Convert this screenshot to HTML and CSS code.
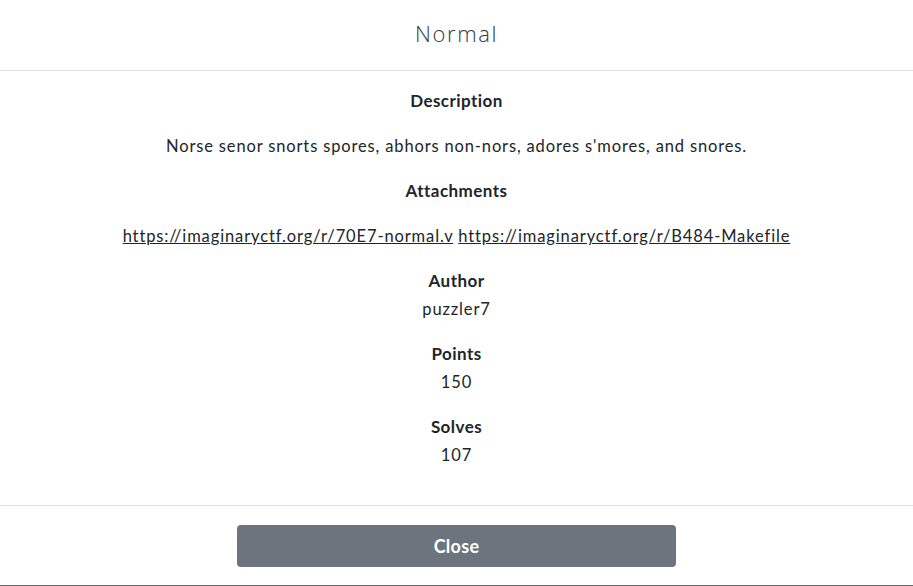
FILE: index.html
```html
<!DOCTYPE html>
<html lang="en">
<head>
<meta charset="utf-8">
<title>Normal</title>
<link rel="stylesheet" href="styles.css">
</head>
<body>
<div class="modal">
  <header class="modal-header">
    <h1 class="modal-title">Normal</h1>
  </header>
  <main class="modal-body">
    <h2 class="label">Description</h2>
    <p class="text gap">Norse senor snorts spores, abhors non-nors, adores s'mores, and snores.</p>
    <h2 class="label">Attachments</h2>
    <p class="text gap links"><a href="#">https://imaginaryctf.org/r/70E7-normal.v</a> <a href="#">https://imaginaryctf.org/r/B484-Makefile</a></p>
    <h2 class="label tight">Author</h2>
    <p class="text">puzzler7</p>
    <h2 class="label tight">Points</h2>
    <p class="text">150</p>
    <h2 class="label tight">Solves</h2>
    <p class="text">107</p>
  </main>
  <footer class="modal-footer">
    <button class="btn-close" type="button">Close</button>
  </footer>
</div>
</body>
</html>
```
FILE: styles.css
```css
html, body {
  margin: 0;
  padding: 0;
  background: #ffffff;
}
body {
  font-family: Lato, "Liberation Sans", sans-serif;
  color: #212529;
}
.modal {
  display: flex;
  flex-direction: column;
  height: 586px;
  box-sizing: border-box;
  border-bottom: 1px solid #666a6e;
}
.modal-header {
  height: 70px;
  border-bottom: 1px solid #dee2e6;
  display: flex;
  align-items: center;
  justify-content: center;
}
.modal-title {
  margin: 0;
  font-family: "Open Sans", sans-serif;
  font-weight: 300;
  font-size: 22px;
  letter-spacing: 1.6px;
  color: #343a40;
  line-height: 28px;
  padding-bottom: 4px;
}
.modal-body {
  flex: 1;
  padding: 18px 16px 0;
  text-align: center;
}
.label {
  margin: 0 0 21px;
  font-size: 17px;
  font-weight: 700;
  line-height: 24px;
  letter-spacing: 0.45px;
}
.label.tight {
  margin-bottom: 4px;
}
.text {
  margin: 0 0 21px;
  font-size: 16.5px;
  line-height: 24px;
  letter-spacing: 0.85px;
}
.text.links {
  letter-spacing: 0.88px;
}
.text a {
  color: #212529;
  text-decoration: underline;
}
.modal-footer {
  height: 80px;
  border-top: 1px solid #dee2e6;
  display: flex;
  justify-content: center;
  align-items: flex-start;
  padding-top: 19px;
  box-sizing: border-box;
}
.btn-close {
  width: 439px;
  height: 42px;
  border: none;
  border-radius: 4px;
  background: #6c757d;
  color: #ffffff;
  font-family: Lato, sans-serif;
  font-size: 18px;
  font-weight: 700;
  letter-spacing: 0.3px;
  cursor: pointer;
}
```
